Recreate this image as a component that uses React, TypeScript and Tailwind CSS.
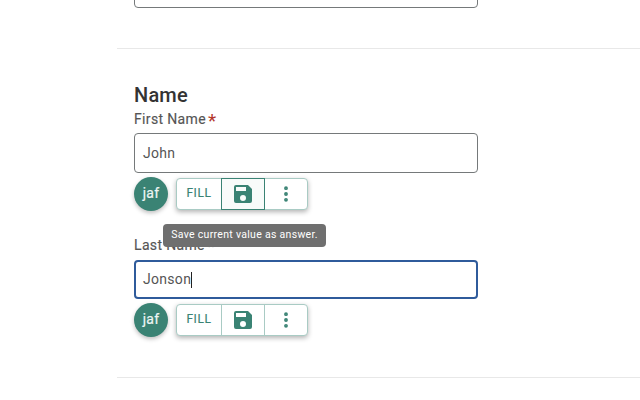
import { EllipsisVertical } from "lucide-react";

function SaveIcon() {
  return (
    <svg viewBox="0 0 24 24" className="size-[24px] fill-[#3a8374]">
      <path d="M17 3H5a2 2 0 0 0-2 2v14a2 2 0 0 0 2 2h14a2 2 0 0 0 2-2V7l-4-4zm-5 16a3 3 0 1 1 0-6 3 3 0 0 1 0 6zm3-10H5V5h10v4z" />
    </svg>
  );
}

function Toolbar({ active }: { active?: boolean }) {
  return (
    <div className="flex h-[32px] items-center gap-[8px]">
      <div className="flex size-[34px] items-center justify-center rounded-full bg-[#3a8374] pb-[1px] text-[14px] tracking-[0.3px] text-[#eef6f4] shadow-[0_2px_4px_rgba(0,0,0,0.25)] [-webkit-text-stroke:0.2px_#eef6f4]">
        jaf
      </div>
      <div className="flex h-[32px] w-[132px] rounded-[4px] border border-[#a9cbc4] bg-white shadow-[0_2px_5px_rgba(0,0,0,0.3)]">
        <div className="flex w-[44px] items-center justify-center pb-[2px] text-[12px] tracking-[0.6px] text-[#3a8374] [-webkit-text-stroke:0.15px_#3a8374]">
          FILL
        </div>
        <div
          className={
            active
              ? "my-[-1px] flex w-[44px] items-center justify-center border border-[#3a8374] bg-[#f8fbfa]"
              : "flex w-[44px] items-center justify-center border-x border-[#a9cbc4]"
          }
        >
          <SaveIcon />
        </div>
        <div className="flex flex-1 items-center justify-center">
          <EllipsisVertical className="size-[20px] text-[#3a8374]" strokeWidth={2.6} />
        </div>
      </div>
    </div>
  );
}

function Label({ text, faded }: { text: string; faded?: boolean }) {
  return (
    <div className="flex h-[20px] items-center text-[14px] tracking-[0.35px] text-[#555555] [-webkit-text-stroke:0.15px_#555555]">
      {text}
      <span
        className={
          faded
            ? "ml-[2px] mt-[2px] text-[19px] leading-none text-[#d4d4d4] [-webkit-text-stroke:0px_transparent]"
            : "ml-[2px] mt-[2px] text-[19px] leading-none text-[#b3372b] [-webkit-text-stroke:0px_transparent]"
        }
      >
        *
      </span>
    </div>
  );
}

export default function App() {
  return (
    <div className="relative h-[400px] w-[640px] overflow-hidden bg-white font-['Roboto',sans-serif]">
      <div className="ml-[134px] mt-[-32px] h-[40px] w-[344px] rounded-[4px] border border-[#75797a]" />
      <div className="ml-[117px] mt-[40px] border-y border-[#e8e8e8] pb-[41px] pl-[17px] pt-[35px]">
        <h2 className="h-[22px] text-[20px] font-medium leading-[22px] tracking-[0.2px] text-[#333333]">Name</h2>
        <div className="mt-[3px]">
          <Label text="First Name" />
        </div>
        <div className="mt-[4px] flex h-[40px] w-[344px] items-center rounded-[4px] border border-[#75797a] px-[8px] text-[14px] tracking-[0.3px] text-[#555555]">
          John
        </div>
        <div className="mt-[5px]">
          <Toolbar active />
        </div>
        <div className="mt-[25px]">
          <Label text="Last Name" faded />
        </div>
        <div className="mt-[5px] flex h-[39px] w-[344px] items-center rounded-[4px] border-2 border-[#2f5b9b] px-[7px] text-[14px] tracking-[0.3px] text-[#555555]">
          Jonson
          <span className="h-[16px] w-px bg-[#222222]" />
        </div>
        <div className="mt-[5px]">
          <Toolbar />
        </div>
      </div>
      <div className="absolute left-[163px] top-[224px] flex h-[23px] w-[163px] items-center justify-center rounded-[4px] bg-[#6f6f6f] pb-[1px] text-[10.5px] tracking-[0.3px] text-white">
        Save current value as answer.
      </div>
    </div>
  );
}
